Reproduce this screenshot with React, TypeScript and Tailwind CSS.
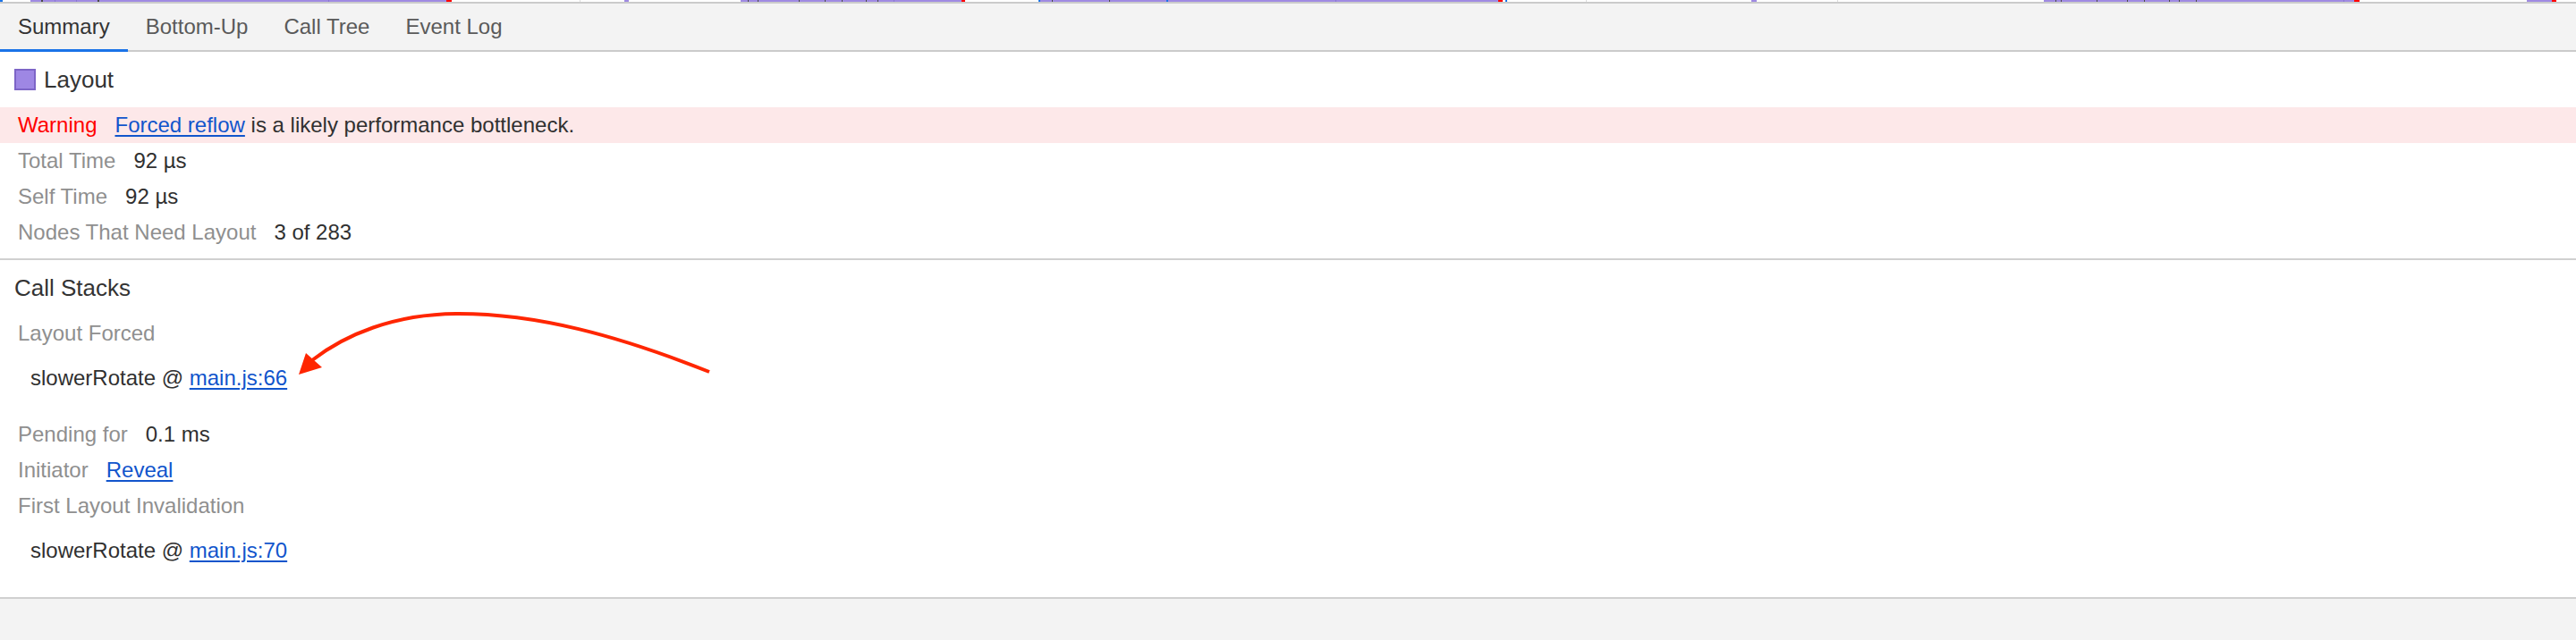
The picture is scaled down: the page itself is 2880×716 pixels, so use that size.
import React from 'react';

const P = '#9f8ae2';
const D = '#4a4a4a';
const L = '#8a76d0';
const R = '#ff0000';
const B = '#1a73e8';

const bars: [number, number, string][] = [
  [0, 3, B],
  [34, 466, P],
  [46, 2, D],
  [61, 1, L],
  [85, 1, L],
  [109, 2, D],
  [367, 1, L],
  [499, 6, R],
  [648, 1, '#dddddd'],
  [698, 5, P],
  [828, 247, P],
  [836, 1, D],
  [847, 1, D],
  [893, 1, D],
  [922, 1, D],
  [941, 1, D],
  [968, 1, D],
  [981, 1, D],
  [999, 1, L],
  [1075, 4, R],
  [1161, 2, B],
  [1163, 512, P],
  [1176, 1, D],
  [1240, 1, D],
  [1304, 2, B],
  [1493, 1, L],
  [1675, 5, R],
  [1683, 2, B],
  [1773, 1, '#dddddd'],
  [1958, 6, P],
  [2054, 1, '#dddddd'],
  [2285, 347, P],
  [2298, 1, D],
  [2304, 1, D],
  [2344, 1, D],
  [2378, 1, D],
  [2397, 1, D],
  [2425, 1, D],
  [2436, 1, D],
  [2455, 1, D],
  [2620, 1, L],
  [2632, 6, R],
  [2825, 28, P],
  [2853, 5, R],
];

function Row({ label, children }: { label: string; children: React.ReactNode }) {
  return (
    <div className="flex h-[40px] shrink-0 items-center pl-[20px]">
      <span className="mr-[20px] text-[#8f8f8f]">{label}</span>
      <span className="text-[#303030]">{children}</span>
    </div>
  );
}

function Link({ children }: { children: React.ReactNode }) {
  return <span className="text-[#1155cc] underline decoration-[2px] underline-offset-[3px]">{children}</span>;
}

function Stack({ line }: { line: string }) {
  return (
    <div className="flex h-[60px] shrink-0 items-center pl-[34px] text-[#303030]">
      <span className="whitespace-pre">slowerRotate @ </span>
      <Link>{line}</Link>
    </div>
  );
}

export default function App() {
  const tabs = ['Summary', 'Bottom-Up', 'Call Tree', 'Event Log'];
  return (
    <div className="relative flex h-[716px] w-[2880px] flex-col overflow-hidden bg-white font-['Liberation_Sans',Arial,sans-serif] text-[24px] leading-none text-[#303030]">
      <svg width="2880" height="2" className="block shrink-0" viewBox="0 0 2880 2">
        {bars.map(([x, w, c], i) => (
          <rect key={i} x={x} y={0} width={w} height={2} fill={c} />
        ))}
      </svg>
      <div className="h-[2px] shrink-0 bg-[#cbcbcb]" />
      <div className="flex h-[54px] shrink-0 border-b-2 border-[#cbcbcb] bg-[#f3f3f3]">
        {tabs.map((t, i) => (
          <div
            key={t}
            className={
              i === 0
                ? 'relative flex items-center px-[20px] text-[#333333]'
                : 'relative flex items-center px-[20px] text-[#5a5a5a]'
            }
          >
            {t}
            {i === 0 && <span className="absolute bottom-[-2px] left-0 right-0 h-[3px] bg-[#1a73e8]" />}
          </div>
        ))}
      </div>

      <div className="flex h-[62px] shrink-0 items-center pl-[16px]">
        <span className="mr-[9px] h-[24px] w-[24px] border-2 border-[#7d65c7] bg-[#9e87e4]" />
        <span className="text-[26px] text-[#333333]">Layout</span>
      </div>

      <div className="flex h-[40px] shrink-0 items-center bg-[#fde8e9] pl-[20px]">
        <span className="mr-[20px] text-[#ff0000]">Warning</span>
        <Link>Forced reflow</Link>
        <span className="whitespace-pre text-[#303030]"> is a likely performance bottleneck.</span>
      </div>
      <Row label="Total Time">92 µs</Row>
      <Row label="Self Time">92 µs</Row>
      <Row label="Nodes That Need Layout">3 of 283</Row>
      <div className="h-[9px] shrink-0" />
      <div className="h-[2px] shrink-0 bg-[#d0d0d0]" />

      <div className="flex h-[62px] shrink-0 items-center pl-[16px] text-[26px] text-[#333333]">Call Stacks</div>
      <div className="flex h-[40px] shrink-0 items-center pl-[20px] text-[#8f8f8f]">Layout Forced</div>
      <Stack line="main.js:66" />
      <div className="h-[13px] shrink-0" />
      <Row label="Pending for">0.1 ms</Row>
      <Row label="Initiator">
        <Link>Reveal</Link>
      </Row>
      <div className="flex h-[40px] shrink-0 items-center pl-[20px] text-[#8f8f8f]">First Layout Invalidation</div>
      <Stack line="main.js:70" />
      <div className="h-[22px] shrink-0" />
      <div className="h-[2px] shrink-0 bg-[#d0d0d0]" />
      <div className="flex-1 bg-[#f3f3f3]" />

      <svg
        className="pointer-events-none absolute left-0 top-0"
        width="2880"
        height="716"
        viewBox="0 0 2880 716"
      >
        <path
          d="M793,416 C690,375 600,351 513,351 C440,351 385,375 349,403"
          fill="none"
          stroke="#ff2600"
          strokeWidth="4"
        />
        <polygon points="334,419 342,395 360,411" fill="#ff2600" />
      </svg>
    </div>
  );
}
